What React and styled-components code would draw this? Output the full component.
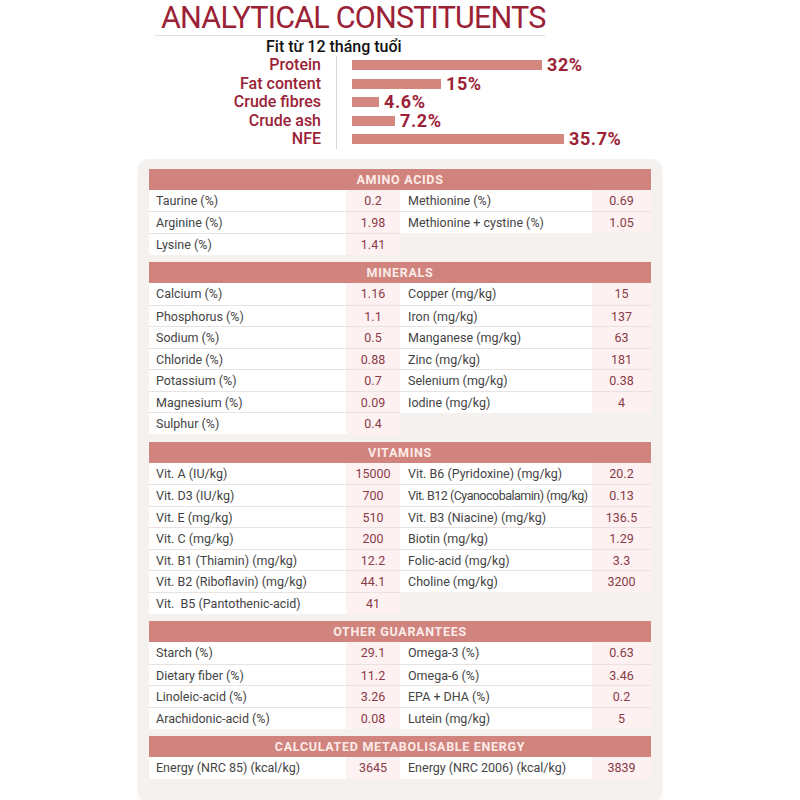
import React from 'react';
import styled, { createGlobalStyle } from 'styled-components';

const Global = createGlobalStyle`
  html, body { margin: 0; padding: 0; background: #fff; }
  body { font-family: Roboto, "Liberation Sans", sans-serif; }
`;

const Page = styled.div`
  width: 800px;
  height: 800px;
  overflow: hidden;
  background: #fff;
`;

const Top = styled.header`
  padding-top: 0;
`;

const Title = styled.h1`
  margin: 0 0 0 161px;
  font: 400 30.5px/36px Roboto, "Liberation Sans", sans-serif;
  color: #9b2236;
  letter-spacing: -0.8px;
`;

const Rule = styled.div`
  margin: -1px 0 0 155px;
  width: 390px;
  height: 1px;
  background: #e2dede;
`;

const Subtitle = styled.div`
  margin: 2px 0 0 266px;
  font: 500 16px/18px Roboto, "Liberation Sans", sans-serif;
  color: #111;
`;

const Chart = styled.div`
  display: flex;
`;

const Labels = styled.div`
  width: 321px;
  text-align: right;
`;

const Label = styled.div`
  height: 18.5px;
  font: 500 16px/18.5px Roboto, "Liberation Sans", sans-serif;
  color: #9b2236;
`;

const Divider = styled.div`
  width: 1px;
  background: #d9d4d4;
  margin: 0 15px;
`;

const Bars = styled.div`
  display: flex;
  flex-direction: column;
`;

const BarRow = styled.div`
  display: flex;
  align-items: center;
  gap: 5px;
  height: 18.5px;
`;

const Bar = styled.div`
  height: 10px;
  background: #d4877f;
  width: ${(p) => p.$w}px;
`;

const BarValue = styled.span`
  font: 700 18px/18px Roboto, "Liberation Sans", sans-serif;
  color: #9b2236;
  letter-spacing: 0.6px;
`;

const Card = styled.section`
  margin: 10px 0 0 138px;
  width: 524px;
  box-sizing: border-box;
  padding: 10px 11px 22px;
  background: #f4f1ef;
  border-radius: 10px;
  box-shadow: 0 1px 3px rgba(0, 0, 0, 0.05);
  display: flex;
  flex-direction: column;
  gap: 8px;
`;

const Section = styled.div`
  display: flex;
  flex-direction: column;
`;

const SectionHead = styled.div`
  height: 21px;
  background: #d0847d;
  color: #fcebe8;
  font: 700 12.5px/21px Roboto, "Liberation Sans", sans-serif;
  letter-spacing: 0.7px;
  text-align: center;
`;

const Body = styled.div`
  display: flex;
`;

const Col = styled.div`
  width: 251px;
  display: flex;
  flex-direction: column;
`;

const Row = styled.div`
  display: grid;
  grid-template-columns: 1fr ${(p) => p.$vw}px;
  height: 21.5px;
  box-sizing: border-box;
  & + & {
    border-top: 1px solid #e8e2e0;
  }
`;

const Name = styled.div`
  background: #fff;
  padding-left: ${(p) => p.$pl}px;
  font: 400 12.5px/21px Roboto, "Liberation Sans", sans-serif;
  color: #444;
  white-space: nowrap;
  letter-spacing: ${(p) => (p.$tight ? '-0.5px' : '0')};
`;

const Val = styled.div`
  background: #fdf2f1;
  text-align: center;
  font: 400 12.5px/21px Roboto, "Liberation Sans", sans-serif;
  color: #8a3a48;
`;

const chart = [
  ['Protein', 32, '32%'],
  ['Fat content', 15, '15%'],
  ['Crude fibres', 4.6, '4.6%'],
  ['Crude ash', 7.2, '7.2%'],
  ['NFE', 35.7, '35.7%'],
];

const sections = [
  {
    title: 'AMINO ACIDS',
    left: [
      ['Taurine (%)', '0.2'],
      ['Arginine (%)', '1.98'],
      ['Lysine (%)', '1.41'],
    ],
    right: [
      ['Methionine (%)', '0.69'],
      ['Methionine + cystine (%)', '1.05'],
    ],
  },
  {
    title: 'MINERALS',
    left: [
      ['Calcium (%)', '1.16'],
      ['Phosphorus (%)', '1.1'],
      ['Sodium (%)', '0.5'],
      ['Chloride (%)', '0.88'],
      ['Potassium (%)', '0.7'],
      ['Magnesium (%)', '0.09'],
      ['Sulphur (%)', '0.4'],
    ],
    right: [
      ['Copper (mg/kg)', '15'],
      ['Iron (mg/kg)', '137'],
      ['Manganese (mg/kg)', '63'],
      ['Zinc (mg/kg)', '181'],
      ['Selenium (mg/kg)', '0.38'],
      ['Iodine (mg/kg)', '4'],
    ],
  },
  {
    title: 'VITAMINS',
    left: [
      ['Vit. A (IU/kg)', '15000'],
      ['Vit. D3 (IU/kg)', '700'],
      ['Vit. E (mg/kg)', '510'],
      ['Vit. C (mg/kg)', '200'],
      ['Vit. B1 (Thiamin) (mg/kg)', '12.2'],
      ['Vit. B2 (Riboflavin) (mg/kg)', '44.1'],
      ['Vit.\u00a0 B5 (Pantothenic-acid)', '41'],
    ],
    right: [
      ['Vit. B6 (Pyridoxine) (mg/kg)', '20.2'],
      ['Vit. B12 (Cyanocobalamin) (mg/kg)', '0.13', true],
      ['Vit. B3 (Niacine) (mg/kg)', '136.5'],
      ['Biotin (mg/kg)', '1.29'],
      ['Folic-acid (mg/kg)', '3.3'],
      ['Choline (mg/kg)', '3200'],
    ],
  },
  {
    title: 'OTHER GUARANTEES',
    left: [
      ['Starch (%)', '29.1'],
      ['Dietary fiber (%)', '11.2'],
      ['Linoleic-acid (%)', '3.26'],
      ['Arachidonic-acid (%)', '0.08'],
    ],
    right: [
      ['Omega-3 (%)', '0.63'],
      ['Omega-6 (%)', '3.46'],
      ['EPA + DHA (%)', '0.2'],
      ['Lutein (mg/kg)', '5'],
    ],
  },
  {
    title: 'CALCULATED METABOLISABLE ENERGY',
    left: [['Energy (NRC 85) (kcal/kg)', '3645']],
    right: [['Energy (NRC 2006) (kcal/kg)', '3839']],
  },
];

function Column({ rows, vw, pl }) {
  return (
    <Col>
      {rows.map(([n, v, tight]) => (
        <Row key={n} $vw={vw}>
          <Name $pl={pl} $tight={tight}>{n}</Name>
          <Val>{v}</Val>
        </Row>
      ))}
    </Col>
  );
}

export default function App() {
  return (
    <Page>
      <Global />
      <Top>
        <Title>ANALYTICAL CONSTITUENTS</Title>
        <Rule />
        <Subtitle>Fit từ 12 tháng tuổi</Subtitle>
        <Chart>
          <Labels>
            {chart.map(([l]) => (
              <Label key={l}>{l}</Label>
            ))}
          </Labels>
          <Divider />
          <Bars>
            {chart.map(([l, n, t]) => (
              <BarRow key={l}>
                <Bar $w={Math.round(n * 5.95)} />
                <BarValue>{t}</BarValue>
              </BarRow>
            ))}
          </Bars>
        </Chart>
      </Top>
      <Card>
        {sections.map((s) => (
          <Section key={s.title}>
            <SectionHead>{s.title}</SectionHead>
            <Body>
              <Column rows={s.left} vw={54} pl={7} />
              <Column rows={s.right} vw={59} pl={8} />
            </Body>
          </Section>
        ))}
      </Card>
    </Page>
  );
}
